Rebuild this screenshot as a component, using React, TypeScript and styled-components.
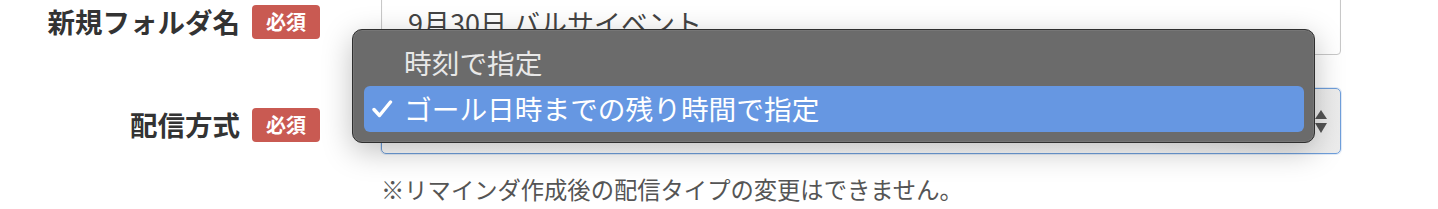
import React from "react";
import styled, { createGlobalStyle } from "styled-components";

const Global = createGlobalStyle`
  html, body { margin: 0; padding: 0; background: #fff; }
  body { font-family: "Noto Sans CJK JP", "Noto Sans", sans-serif; overflow: hidden; }
`;

const Page = styled.div`
  margin-top: -11px;
  display: grid;
  grid-template-columns: 320px 960px;
  column-gap: 61px;
  row-gap: 33px;
  align-items: center;
`;

const LabelCell = styled.div<{ $shift?: number }>`
  display: flex;
  justify-content: flex-end;
  align-items: center;
  gap: 12px;
  padding-top: ${(p) => p.$shift ?? 0}px;
`;

const LabelText = styled.span`
  font-size: 27.5px;
  font-weight: 700;
  color: #333;
  line-height: 1;
`;

const Badge = styled.span`
  display: inline-flex;
  align-items: center;
  justify-content: center;
  width: 68px;
  height: 34px;
  border-radius: 4px;
  background: #c95a52;
  color: #fff;
  font-size: 20px;
  font-weight: 700;
  line-height: 1;
`;

const TextInput = styled.div`
  box-sizing: border-box;
  height: 66px;
  border: 1px solid #c8c8c8;
  border-radius: 4px;
  background: #fff;
  box-shadow: inset 0 1px 2px rgba(0, 0, 0, 0.06);
  display: flex;
  align-items: center;
  padding: 0 0 0 26px;
  font-size: 27px;
  color: #444;
`;

const SelectBox = styled.div`
  position: relative;
  box-sizing: border-box;
  height: 66px;
  border: 1.5px solid #6f9fdb;
  border-radius: 5px;
  background: linear-gradient(to right, #fff 0%, #fdfdfd 80%, #ececec 100%);
  box-shadow: 0 0 0 1px rgba(110, 155, 215, 0.2);
`;

const Arrows = styled.svg`
  position: absolute;
  right: 12px;
  top: 20px;
`;

const Menu = styled.div`
  position: absolute;
  left: -30px;
  top: -60px;
  width: 963px;
  box-sizing: border-box;
  padding: 10px 10px 10px 11px;
  background: #6b6b6b;
  border: 1px solid #2f2f2f;
  border-radius: 10px;
  box-shadow: 0 8px 30px rgba(0, 0, 0, 0.25), inset 0 0 0 1px rgba(255, 255, 255, 0.08);
  z-index: 2;
`;

const Item = styled.div<{ $active?: boolean }>`
  position: relative;
  height: 46px;
  display: flex;
  align-items: center;
  padding-left: 40px;
  border-radius: 6px;
  font-size: 27.7px;
  line-height: 1;
  color: ${(p) => (p.$active ? "#fff" : "#e8e8e8")};
  background: ${(p) => (p.$active ? "#6697e2" : "transparent")};
`;

const Check = styled.svg`
  position: absolute;
  left: 8px;
  top: 13px;
`;

const Hint = styled.div`
  grid-column: 2;
  margin-top: -13px;
  font-size: 23.3px;
  color: #555;
  line-height: 1.3;
`;

export default function App() {
  return (
    <>
      <Global />
      <Page>
        <LabelCell>
          <LabelText>新規フォルダ名</LabelText>
          <Badge>必須</Badge>
        </LabelCell>
        <TextInput>9月30日 バルサイベント</TextInput>

        <LabelCell $shift={8}>
          <LabelText>配信方式</LabelText>
          <Badge>必須</Badge>
        </LabelCell>
        <SelectBox>
          <Arrows width="14" height="26" viewBox="0 0 14 26">
            <path d="M7 1 L13 10 L1 10 Z" fill="#555" />
            <path d="M1 14 L13 14 L7 24 Z" fill="#555" />
          </Arrows>
          <Menu>
            <Item>時刻で指定</Item>
            <Item $active>
              <Check width="21" height="20" viewBox="0 0 21 20">
                <path d="M2 10.5 L7.5 16.5 L18.5 3" fill="none" stroke="#fff" strokeWidth="3.4" strokeLinecap="round" strokeLinejoin="round" />
              </Check>
              ゴール日時までの残り時間で指定
            </Item>
          </Menu>
        </SelectBox>

        <Hint>※リマインダ作成後の配信タイプの変更はできません。</Hint>
      </Page>
    </>
  );
}
